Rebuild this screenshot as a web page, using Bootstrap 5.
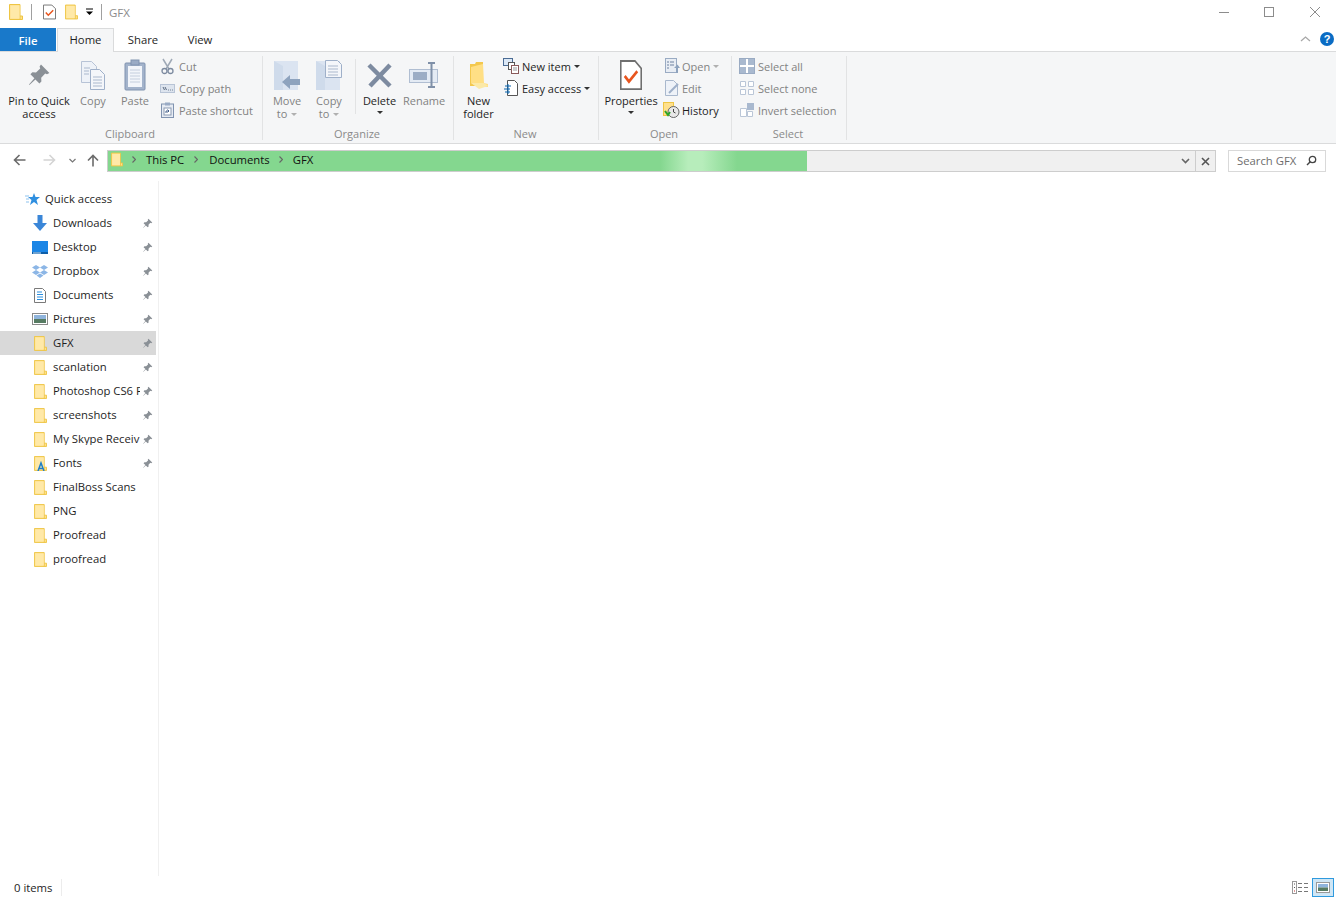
<!DOCTYPE html>
<html lang="en"><head><meta charset="utf-8"><title>GFX</title>
<link href="https://cdn.jsdelivr.net/npm/bootstrap@5.3.0/dist/css/bootstrap.min.css" rel="stylesheet">
<style>
html,body{height:100%;overflow:hidden}
body{font-family:"Open Sans","Noto Sans",sans-serif;font-size:11.3px;color:#1e1e1e;background:#fff;line-height:13px}
svg{display:block;flex:none}
.win{height:897px}
.tbar{height:28px;padding-left:9px;padding-bottom:4px}
.tbar .sepv{width:1px;height:16px;background:#a0a0a0}
.ttl{color:#8c8c8c;font-size:11.5px}
.ctl{margin-left:auto}
.tabs{height:24px;border-bottom:1px solid #dadbdc}
.tb{height:24px;line-height:24px;text-align:center}
.tb-file{width:56px;background:#1979ca;color:#fff;height:23px;line-height:25px;font-weight:600}
.tb-home{width:57px;margin-left:1px;background:#f5f6f7;border:1px solid #dadbdc;border-bottom:0;line-height:22px}
.tb-share{width:58px}
.tb-view{width:56px}
.rib{height:92px;background:#f5f6f7;border-bottom:1px solid #dadbdc;padding-top:4px;font-size:11px}
.grp{height:84px;border-right:1px solid #e2e3e4;flex:none}
.grp-1{width:263px}.grp-2{width:191px;padding-left:3px}.grp-3{width:145px}.grp-4{width:133px}.grp-5{width:115px}
.grp-2 .glab{margin-left:-3px}
.grp-in{height:71px}
.glab{height:12px;line-height:13px;text-align:center;color:#8a8a8a;padding-right:2px}
.lg{height:71px;text-align:center}
.lg .ic{height:38px;display:flex;justify-content:center;align-items:center}
.dis{color:#828282}
.vsep{width:1px;height:55px;margin:3px 0 0 5px;background:#e2e3e4}
.smcol{margin-top:-1px}
.sm{height:22px;display:flex;align-items:center;white-space:nowrap}
.caret-d{display:inline-block;width:0;height:0;border:3px solid transparent;border-top-color:#333;border-bottom:0;vertical-align:2px;margin-left:3px}
.caret-g{border-top-color:#b0b0b0}
.caret-c{display:block;margin:4px auto 0}
.addr-row{height:37px;padding-top:6px}
.nv{height:20px;display:flex;align-items:center;justify-content:center}
.addr{width:1109px;height:22px;background:#f0f0f0;border:1px solid #cdcdcd;position:relative;margin-left:8px}
.prog{width:699px;height:100%;background:linear-gradient(90deg,#84d78f 0,#84d78f 79%,#b7edbb 83%,#b7edbb 85%,#84d78f 90%,#84d78f 100%)}
.crumb{position:absolute;left:3px;top:0;height:17px;display:flex;align-items:center;color:#111}
.addr-end{position:absolute;right:0;top:0;height:20px;width:40px;display:flex;align-items:center}
.srch{width:98px;height:22px;margin-left:12px;border:1px solid #d9d9d9;padding:0 8px 2px 8px;color:#6d6d6d;display:flex;align-items:center;justify-content:space-between}
.mainp{flex:1 1 auto;min-height:0}
.side{width:159px;border-right:1px solid #f0f0f0;padding-top:6px;flex:none}
.it{height:24px;width:156px;display:flex;align-items:center;color:#1e1e1e}
.it.act{background:#d9d9d9}
.it .ii{width:16px;margin-left:32px;display:flex;justify-content:center;flex:none}
.it .tx{width:87px;margin-left:5px;margin-bottom:2px;overflow:hidden;white-space:nowrap;flex:none}
.it .pn{margin-left:2px}
.stat{height:21px;flex:none;padding-top:2px}
.stat .cnt{margin-left:14px;width:48px;border-right:1px solid #ececec;line-height:17px;height:17px}
.vw{width:22px;height:19px;border:1px solid #2f9ade;background:#cfe6f5;display:flex;align-items:center;justify-content:center;margin:0 2px 0 3px}
</style></head>
<body>
<svg width="0" height="0" style="position:absolute">
<defs>
<symbol id="fd" viewBox="0 0 14 16"><path d="M.5.5h10.500v11.500h2.500v3.500H.5z" fill="#ffe08c" stroke="#eec544"/><path d="M11 12v3.500" stroke="#eec544"/><path d="M1.500 1.500h9v13h-9z" fill="#ffe9a8"/></symbol>
<symbol id="pin" viewBox="0 0 12 12"><path d="M7 .8l4.200 4.200-1.200.6-.9-.3-2 2.100.1 1.800-1 1-2-2L1.200 11 1 10.800l2.700-3.200-2-2 1-1 1.800.1 2.100-2-.3-.9z" fill="#8a9096"/></symbol>
<symbol id="chk" viewBox="0 0 14 16"><path d="M.5.500h9l4 4v11H.5z" fill="#fff" stroke="#6f6f6f"/><path d="M3 8.500l2.700 3L11 6" fill="none" stroke="#e8551e" stroke-width="1.600"/></symbol>
</defs></svg>
<div class="win d-flex flex-column">
<div class="tbar d-flex align-items-center flex-none">
 <svg width="14" height="16"><use href="#fd"/></svg>
 <div class="sepv" style="margin-left:8px"></div>
 <svg width="13" height="16" style="margin-left:11px"><use href="#chk"/></svg>
 <svg width="13" height="16" style="margin-left:9px"><use href="#fd"/></svg>
 <svg width="9" height="8" style="margin-left:7px"><path d="M1 1h7" stroke="#000"/><path d="M1 3.500h7L4.500 7z" fill="#000"/></svg>
 <div class="sepv" style="margin-left:7px"></div>
 <span class="ttl" style="margin-left:7px">GFX</span>
 <svg class="ctl" width="112" height="14" style="margin-right:5px"><path d="M0 7.500h10" stroke="#8c8c8c"/><rect x="45.500" y="2.500" width="9" height="9" fill="none" stroke="#8c8c8c"/><path d="M91 2l10 10M101 2L91 12" stroke="#8c8c8c" fill="none"/></svg>
</div>
<div class="tabs d-flex flex-none">
 <div class="tb tb-file">File</div><div class="tb tb-home">Home</div><div class="tb tb-share">Share</div><div class="tb tb-view">View</div>
 <svg class="ctl" width="36" height="16" style="margin-top:3px"><path d="M1 10l4.500-4 4.500 4" fill="none" stroke="#a8a8a8" stroke-width="1.300"/><circle cx="27" cy="8" r="7" fill="#0a6cc4"/><text x="27" y="12" text-anchor="middle" font-family="Liberation Sans" font-weight="700" font-size="11" fill="#fff">?</text></svg>
</div>
<div class="rib d-flex flex-none">
 <div class="grp grp-1"><div class="grp-in d-flex">
  <div class="lg" style="width:78px"><div class="ic"><svg width="24" height="24" viewBox="0 0 12 12"><use href="#pin"/></svg></div>Pin to Quick<br>access</div>
  <div class="lg dis" style="width:30px"><div class="ic"><svg width="26" height="30" viewBox="0 0 26 30"><path d="M1.500 1.500h10l5 5v16h-15z" fill="#eef2f8" stroke="#b7c3d6"/><path d="M10.500 9.500h9l5 5v15h-14z" fill="#f4f6fa" stroke="#9fb0c9"/><path d="M4 8h6M4 11h5M4 14h5M13 17h9M13 20h9M13 23h9M13 26h9" stroke="#aab8cd"/></svg></div>Copy</div>
  <div class="lg dis" style="width:54px"><div class="ic"><svg width="24" height="32" viewBox="0 0 24 32"><rect x="2" y="4" width="20" height="27" rx="1" fill="#a3b3cb" stroke="#8093b0"/><rect x="5" y="7" width="14" height="21" fill="#f2f5fa"/><rect x="8" y="1" width="8" height="5" fill="#9aabc5" stroke="#8093b0"/><path d="M7 11h10M7 14h10M7 17h10M7 20h10M7 23h10" stroke="#c4cedd"/></svg></div>Paste</div>
  <div class="smcol dis" style="margin-left:-3px">
   <div class="sm"><svg width="15" height="17" viewBox="0 0 15 17" style="margin:0 4px 0 1px"><path d="M3 1l6 10M12 1L6 11" stroke="#9fa9b6" stroke-width="1.500"/><circle cx="4.500" cy="13" r="2.500" fill="none" stroke="#7d8ba0" stroke-width="1.300"/><circle cx="10.500" cy="13" r="2.500" fill="none" stroke="#7d8ba0" stroke-width="1.300"/></svg>Cut</div>
   <div class="sm"><svg width="15" height="9" viewBox="0 0 15 9" style="margin:0 4px 0 1px"><rect x=".5" y=".5" width="14" height="8" fill="#dde4ee" stroke="#b8c4d6"/><path d="M3 3l1.500 3M5 3l1.500 3M8 6h.8M10 6h.8M12 6h.8" stroke="#5a6a80"/></svg>Copy path</div>
   <div class="sm"><svg width="13" height="16" viewBox="0 0 13 16" style="margin:0 5px 0 2px"><rect x=".5" y="2" width="12" height="13.500" fill="#e6ebf3" stroke="#8093b0"/><rect x="4" y=".5" width="5" height="3" fill="#9aabc5"/><rect x="3" y="6" width="7" height="7" fill="#fff" stroke="#8a9ab2"/><path d="M5 11V9h3M6.500 7.500L8 9l-1.500 1.500" fill="none" stroke="#44608c"/></svg>Paste shortcut</div>
  </div>
 </div><div class="glab">Clipboard</div></div>
 <div class="grp grp-2"><div class="grp-in d-flex">
  <div class="lg dis" style="width:42px"><div class="ic"><svg width="28" height="30" viewBox="0 0 28 30"><rect x="1" y="1" width="24" height="29" fill="#dbe4f1"/><path d="M1 1l9 5v24H1z" fill="#cfdbeb"/><path d="M27 19v6H17v4l-8-7 8-7v4z" fill="#8ea3be"/></svg></div>Move<br>to <span class="caret-d caret-g" style="margin-left:1px"></span></div>
  <div class="lg dis" style="width:42px"><div class="ic"><svg width="28" height="30" viewBox="0 0 28 30"><rect x="1" y="1" width="24" height="29" fill="#dbe4f1"/><path d="M1 1l9 5v24H1z" fill="#cfdbeb"/><path d="M10.500.5h12l4 4v13h-16z" fill="#f4f6fa" stroke="#9fb0c9"/><path d="M13 6h10M13 9h10M13 12h10M13 15h10" stroke="#aab8cd"/></svg></div>Copy<br>to <span class="caret-d caret-g" style="margin-left:1px"></span></div>
  <div class="vsep"></div>
  <div class="lg" style="width:47px"><div class="ic"><svg width="26" height="26" viewBox="0 0 26 26"><path d="M2 3l21 21M23 3L3 24" stroke="#7d8ba0" stroke-width="4.500"/></svg></div>Delete<span class="caret-d caret-c"></span></div>
  <div class="lg dis" style="width:42px"><div class="ic"><svg width="30" height="28" viewBox="0 0 30 28"><rect x=".5" y="8.500" width="28" height="13" fill="#e4ebf4" stroke="#b0bed2"/><rect x="4" y="11" width="14" height="8" fill="#9cadc5"/><path d="M19 2h7M19 26h7M22.500 2v24" stroke="#7f90a8" stroke-width="2"/></svg></div>Rename</div>
 </div><div class="glab">Organize</div></div>
 <div class="grp grp-3"><div class="grp-in d-flex">
  <div class="lg" style="width:49px"><div class="ic"><svg width="20" height="29" viewBox="0 0 20 29"><path d="M1 3h5l1-2h7v24H1z" fill="#f3c84e"/><path d="M2 22V6l12-3 1 19 4 1v3H10z" fill="#ffdf85"/><path d="M2 22l8 6 9-3-4-3z" fill="#fbe9a8"/></svg></div>New<br>folder</div>
  <div class="smcol">
   <div class="sm"><svg width="16" height="16" viewBox="0 0 16 16" style="margin-right:3px"><rect x=".5" y=".5" width="9" height="7" fill="#dbe8f6" stroke="#4a6b94"/><rect x="5.500" y="4.500" width="6" height="7" fill="#fff" stroke="#555"/><rect x="8.500" y="7.500" width="7" height="8" fill="#fff" stroke="#8a5a5a"/><path d="M10 10h4M10 12h4" stroke="#999"/></svg>New item<span class="caret-d"></span></div>
   <div class="sm"><svg width="16" height="16" viewBox="0 0 16 16" style="margin-right:3px"><path d="M4.500.5h7l3 3v12h-10z" fill="#fff" stroke="#555"/><path d="M2 6h6M1 9h6M2 12h5" stroke="#0a64ad"/><path d="M5 4v10" stroke="#0a64ad"/></svg>Easy access<span class="caret-d"></span></div>
  </div>
 </div><div class="glab">New</div></div>
 <div class="grp grp-4"><div class="grp-in d-flex">
  <div class="lg" style="width:64px"><div class="ic"><svg width="22" height="30" viewBox="0 0 14 16" preserveAspectRatio="none"><use href="#chk"/></svg></div>Properties<span class="caret-d caret-c"></span></div>
  <div class="smcol">
   <div class="sm dis"><svg width="15" height="16" viewBox="0 0 15 16" style="margin:0 2px 0 2px"><rect x=".5" y=".5" width="11" height="14" fill="#e8edf4" stroke="#9aabc3"/><path d="M2 4h2M2 7h2M2 10h2M5 4h4M5 7h4" stroke="#6e82a0"/><path d="M11 15v-5H9l3.500-3.500L15 10h-2v5z" fill="#8ea3be"/></svg>Open<span class="caret-d caret-g"></span></div>
   <div class="sm dis"><svg width="15" height="16" viewBox="0 0 15 16" style="margin:0 2px 0 2px"><path d="M.5.500h8l4 4v11H.5z" fill="#eef2f8" stroke="#a9b8cd"/><path d="M4 13l9-9" stroke="#9fb0c9" stroke-width="2"/></svg>Edit</div>
   <div class="sm"><svg width="17" height="16" viewBox="0 0 17 16" style="margin-right:2px"><rect x=".5" y=".5" width="10" height="13" fill="#ffe08c" stroke="#eec544"/><circle cx="10.500" cy="10" r="5.500" fill="#e8e8e8" stroke="#666"/><path d="M10.500 7v3l2 1" stroke="#444" fill="none"/><path d="M2 9l3 4 2-3" stroke="#2aa52a" stroke-width="2" fill="none"/></svg>History</div>
  </div>
 </div><div class="glab">Open</div></div>
 <div class="grp grp-5"><div class="grp-in d-flex dis" style="padding-left:7px">
  <div class="smcol">
   <div class="sm"><svg width="16" height="16" viewBox="0 0 16 16" style="margin-right:3px"><rect x=".5" y=".5" width="15" height="15" fill="#fff" stroke="#9aabc3"/><path d="M1 1h6v6H1zM9 1h6v6H9zM1 9h6v6H1zM9 9h6v6H9z" fill="#a9b9cf"/></svg>Select all</div>
   <div class="sm"><svg width="16" height="16" viewBox="0 0 16 16" style="margin-right:3px"><path d="M1.500 1.500h5v5h-5zM9.500 1.500h5v5h-5zM1.500 9.500h5v5h-5zM9.500 9.500h5v5h-5z" fill="#fff" stroke="#bac6d7"/></svg>Select none</div>
   <div class="sm"><svg width="16" height="16" viewBox="0 0 16 16" style="margin-right:3px"><path d="M1.500 6.500h6v8h-6zM8.500 9.500h5v5h-5z" fill="#fff" stroke="#bac6d7"/><rect x="8" y="1" width="7" height="7" fill="#a9b9cf"/></svg>Invert selection</div>
  </div>
 </div><div class="glab">Select</div></div>
</div>
<div class="addr-row d-flex flex-none">
 <div class="nv" style="width:14px;margin-left:12px"><svg width="13" height="12" viewBox="0 0 13 12"><path d="M12.500 6H1.500M6.500 1l-5 5 5 5" fill="none" stroke="#6b6b6b" stroke-width="1.600"/></svg></div>
 <div class="nv" style="width:14px;margin-left:16px"><svg width="13" height="12" viewBox="0 0 13 12"><path d="M.5 6h11M6.500 1l5 5-5 5" fill="none" stroke="#d4d4d4" stroke-width="1.600"/></svg></div>
 <div class="nv" style="width:8px;margin-left:12px"><svg width="7" height="5" viewBox="0 0 7 5"><path d="M.5 1l3 3 3-3" fill="none" stroke="#777" stroke-width="1.200"/></svg></div>
 <div class="nv" style="width:13px;margin-left:10px"><svg width="12" height="13" viewBox="0 0 12 13"><path d="M6 12.500V1.500M1 6.500l5-5 5 5" fill="none" stroke="#6b6b6b" stroke-width="1.600"/></svg></div>
 <div class="addr">
  <div class="prog"></div>
  <div class="crumb">
   <svg width="12" height="15"><use href="#fd"/></svg>
   <svg width="4" height="7" style="margin-left:9px"><path d="M.5.500l3 3-3 3" fill="none" stroke="#666" stroke-width="1.200"/></svg>
   <span style="margin-left:10px">This PC</span>
   <svg width="4" height="7" style="margin-left:10px"><path d="M.5.500l3 3-3 3" fill="none" stroke="#666" stroke-width="1.200"/></svg>
   <span style="margin-left:11px">Documents</span>
   <svg width="4" height="7" style="margin-left:9px"><path d="M.5.500l3 3-3 3" fill="none" stroke="#666" stroke-width="1.200"/></svg>
   <span style="margin-left:10px">GFX</span>
  </div>
  <div class="addr-end">
   <svg width="9" height="6" style="margin-left:6px" viewBox="0 0 9 6"><path d="M1 1l3.500 3.500L8 1" fill="none" stroke="#666" stroke-width="1.600"/></svg>
   <div style="width:1px;height:20px;background:#cdcdcd;margin-left:5px"></div>
   <svg width="9" height="9" style="margin-left:5px" viewBox="0 0 9 9"><path d="M1 1l7 7M8 1L1 8" stroke="#555" stroke-width="1.600"/></svg>
  </div>
 </div>
 <div class="srch"><span>Search GFX</span><svg width="11" height="11" viewBox="0 0 11 11"><circle cx="6.500" cy="4.500" r="3.200" fill="none" stroke="#444" stroke-width="1.300"/><path d="M4 7l-3 3" stroke="#444" stroke-width="1.500"/></svg></div>
</div>
<div class="mainp d-flex">
 <div class="side">
  <div class="it"><span class="ii" style="margin-left:25px"><svg width="16" height="15" viewBox="0 0 16 15"><path d="M9 1l1.500 4H15l-3.500 3 1.500 5-4-3-4 3 1.500-5L3 5h4.500z" fill="#2f8fe0"/><path d="M0 4h4M1 7h3M1 10h3" stroke="#8cc2ee"/></svg></span><span class="tx" style="width:90px;margin-left:4px">Quick access</span></div>
  <div class="it"><span class="ii"><svg width="16" height="16" viewBox="0 0 16 16"><path d="M5.500 0h5v8H15l-7 8-7-8h4.500z" fill="#3a86d8"/></svg></span><span class="tx">Downloads</span><svg class="pn" width="11" height="11"><use href="#pin"/></svg></div>
  <div class="it"><span class="ii"><svg width="16" height="13" viewBox="0 0 16 13"><rect width="16" height="13" fill="#1c86e6"/><rect y="11" width="16" height="2" fill="#0e5ea8"/><path d="M1 12h8" stroke="#cfe6f8"/></svg></span><span class="tx">Desktop</span><svg class="pn" width="11" height="11"><use href="#pin"/></svg></div>
  <div class="it"><span class="ii"><svg width="16" height="14" viewBox="0 0 16 14"><path d="M4 1l4 2.500L4 6 0 3.500zM12 1l4 2.500L12 6 8 3.500zM4 6l4 2.500L4 11 0 8.500zM12 6l4 2.500-4 2.500-4-2.500zM8 9.500l3.500 2L8 14l-3.500-2.500z" fill="#8cb6e6"/></svg></span><span class="tx">Dropbox</span><svg class="pn" width="11" height="11"><use href="#pin"/></svg></div>
  <div class="it"><span class="ii"><svg width="12" height="15" viewBox="0 0 12 15"><path d="M.5.500h8l3 3v11H.5z" fill="#fff" stroke="#7a7a7a"/><path d="M3 4h5M3 6.500h6M3 9h6M3 11.500h6" stroke="#2a8fe0"/></svg></span><span class="tx">Documents</span><svg class="pn" width="11" height="11"><use href="#pin"/></svg></div>
  <div class="it"><span class="ii"><svg width="16" height="12" viewBox="0 0 16 12"><rect x=".5" y=".5" width="15" height="11" fill="#fff" stroke="#8a8a8a"/><rect x="2" y="2" width="12" height="4" fill="#8fb4dc"/><rect x="2" y="6" width="12" height="4" fill="#567b62"/></svg></span><span class="tx">Pictures</span><svg class="pn" width="11" height="11"><use href="#pin"/></svg></div>
  <div class="it act"><span class="ii"><svg width="13" height="15"><use href="#fd"/></svg></span><span class="tx">GFX</span><svg class="pn" width="11" height="11"><use href="#pin"/></svg></div>
  <div class="it"><span class="ii"><svg width="13" height="15"><use href="#fd"/></svg></span><span class="tx">scanlation</span><svg class="pn" width="11" height="11"><use href="#pin"/></svg></div>
  <div class="it"><span class="ii"><svg width="13" height="15"><use href="#fd"/></svg></span><span class="tx">Photoshop CS6 F</span><svg class="pn" width="11" height="11"><use href="#pin"/></svg></div>
  <div class="it"><span class="ii"><svg width="13" height="15"><use href="#fd"/></svg></span><span class="tx">screenshots</span><svg class="pn" width="11" height="11"><use href="#pin"/></svg></div>
  <div class="it"><span class="ii"><svg width="13" height="15"><use href="#fd"/></svg></span><span class="tx">My Skype Receiv</span><svg class="pn" width="11" height="11"><use href="#pin"/></svg></div>
  <div class="it"><span class="ii"><svg width="13" height="15" viewBox="0 0 13 15"><use href="#fd" width="13" height="15"/><path d="M4 15l3-8 3 8M5 12.500h4" fill="none" stroke="#1f7fc8" stroke-width="1.500"/></svg></span><span class="tx">Fonts</span><svg class="pn" width="11" height="11"><use href="#pin"/></svg></div>
  <div class="it"><span class="ii"><svg width="13" height="15"><use href="#fd"/></svg></span><span class="tx" style="width:100px">FinalBoss Scans</span></div>
  <div class="it"><span class="ii"><svg width="13" height="15"><use href="#fd"/></svg></span><span class="tx">PNG</span></div>
  <div class="it"><span class="ii"><svg width="13" height="15"><use href="#fd"/></svg></span><span class="tx">Proofread</span></div>
  <div class="it"><span class="ii"><svg width="13" height="15"><use href="#fd"/></svg></span><span class="tx">proofread</span></div>
 </div>
 <div class="flex-grow-1"></div>
</div>
<div class="stat d-flex align-items-center">
 <div class="cnt">0 items</div>
 <svg class="ctl" width="17" height="13" viewBox="0 0 17 13"><rect x=".5" y=".5" width="4" height="12" fill="#fff" stroke="#999"/><path d="M2 3h1M2 6.500h1" stroke="#555"/><path d="M2 10h1" stroke="#c03030"/><path d="M6 2.500h4M12 2.500h4M6 6.500h4M12 6.500h4M6 10.500h4M12 10.500h4" stroke="#777"/></svg>
 <div class="vw"><svg width="14" height="11" viewBox="0 0 14 11"><rect x=".5" y=".5" width="13" height="10" fill="#fff" stroke="#999"/><rect x="2" y="2" width="10" height="3.500" fill="#8fb4dc"/><rect x="2" y="5.500" width="10" height="3.500" fill="#567b62"/></svg></div>
</div>
</div>
<script src="https://cdn.jsdelivr.net/npm/bootstrap@5.3.0/dist/js/bootstrap.bundle.min.js"></script>
</body></html>
